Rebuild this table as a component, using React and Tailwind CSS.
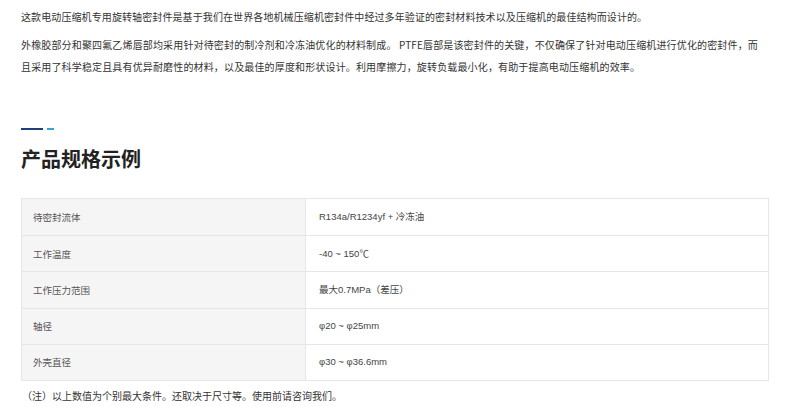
import React from 'react';

const specs = [
  { label: '待密封流体', value: 'R134a/R1234yf + 冷冻油' },
  { label: '工作温度', value: '-40 ~ 150℃' },
  { label: '工作压力范围', value: '最大0.7MPa（差压）' },
  { label: '轴径', value: 'φ20 ~ φ25mm' },
  { label: '外壳直径', value: 'φ30 ~ φ36.6mm' },
];

export default function App() {
  return (
    <div className="min-h-[407px] bg-white font-['Noto_Sans_CJK_SC',sans-serif] text-[#333]">
      <div className="w-[790px] pl-[21px] pt-[6px]">

        {/* Intro */}
        <p className="text-[10px] leading-[22px] tracking-[0.1px]">
          这款电动压缩机专用旋转轴密封件是基于我们在世界各地机械压缩机密封件中经过多年验证的密封材料技术以及压缩机的最佳结构而设计的。
        </p>
        <p className="mt-[6px] text-[10px] leading-[22px] tracking-[0.15px]">
          外橡胶部分和聚四氟乙烯唇部均采用针对待密封的制冷剂和冷冻油优化的材料制成。 PTFE唇部是该密封件的关键，不仅确保了针对电动压缩机进行优化的密封件，而
          <br />
          且采用了科学稳定且具有优异耐磨性的材料，以及最佳的厚度和形状设计。利用摩擦力，旋转负载最小化，有助于提高电动压缩机的效率。
        </p>

        {/* Section title */}
        <div className="mt-[50px] flex items-center gap-[4px]">
          <span className="h-[2px] w-[22px] bg-[#1e3f78]" />
          <span className="h-[2px] w-[7px] bg-[#38a2d6]" />
        </div>
        <h2 className="mt-[15px] text-[20px] font-bold leading-[28px] text-[#222]">产品规格示例</h2>

        {/* Spec table */}
        <div className="mt-[25px] w-[748px] border border-[#e6e6e6]">
          {specs.map((row, i) => (
            <div
              key={row.label}
              className={`flex h-[36.2px] ${i > 0 ? 'border-t border-[#e6e6e6]' : ''}`}
            >
              <div className="flex w-[284px] items-center border-r border-[#e6e6e6] bg-[#f5f5f5] pl-[11px] text-[9.5px] text-[#555]">
                {row.label}
              </div>
              <div className="flex flex-1 items-center pl-[13px] font-['Liberation_Sans','Noto_Sans_CJK_SC',sans-serif] text-[9.5px] text-[#444]">
                {row.value}
              </div>
            </div>
          ))}
        </div>

        <p className="mt-[4px] pl-[1px] text-[10px] leading-[22px]">
          （注）以上数值为个别最大条件。还取决于尺寸等。使用前请咨询我们。
        </p>
      </div>
    </div>
  );
}
